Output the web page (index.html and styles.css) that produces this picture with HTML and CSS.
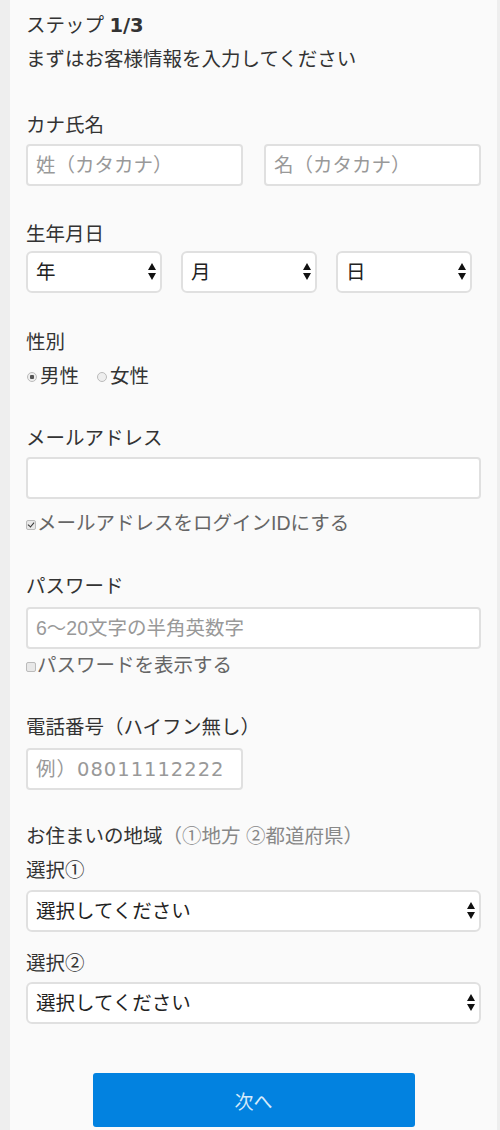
FILE: index.html
```html
<!DOCTYPE html>
<html lang="ja">
<head>
  <meta charset="UTF-8">
  <meta name="viewport" content="width=device-width, initial-scale=1.0">
  <title>お客様情報の入力</title>
  <link rel="stylesheet" href="styles.css">
</head>
<body>

  <div class="page">
    <h1 class="step">ステップ <b>1/3</b></h1>
    <p class="lead">まずはお客様情報を入力してください</p>

    <div class="field first">
      <label class="label">カナ氏名</label>
      <div class="row half">
        <input type="text" class="text" placeholder="姓（カタカナ）">
        <input type="text" class="text" placeholder="名（カタカナ）">
      </div>
    </div>

    <div class="field birth-field">
      <label class="label">生年月日</label>
      <div class="row birth">
        <div class="select-wrap">
          <select class="select"><option>年</option></select>
          <svg class="arrows" width="8" height="17" viewBox="0 0 8 17"><path d="M4 0 L8 7 L0 7 Z M0 10 L8 10 L4 17 Z" fill="#111"/></svg>
        </div>
        <div class="select-wrap">
          <select class="select"><option>月</option></select>
          <svg class="arrows" width="8" height="17" viewBox="0 0 8 17"><path d="M4 0 L8 7 L0 7 Z M0 10 L8 10 L4 17 Z" fill="#111"/></svg>
        </div>
        <div class="select-wrap">
          <select class="select"><option>日</option></select>
          <svg class="arrows" width="8" height="17" viewBox="0 0 8 17"><path d="M4 0 L8 7 L0 7 Z M0 10 L8 10 L4 17 Z" fill="#111"/></svg>
        </div>
      </div>
    </div>

    <div class="field">
      <label class="label">性別</label>
      <div class="radios">
        <label class="radio"><input type="radio" name="sex" checked>男性</label>
        <label class="radio"><input type="radio" name="sex">女性</label>
      </div>
    </div>

    <div class="field">
      <label class="label">メールアドレス</label>
      <input type="email" class="text wide">
      <label class="check mail-check"><input type="checkbox" checked>メールアドレスをログインIDにする</label>
    </div>

    <div class="field pass-field">
      <label class="label">パスワード</label>
      <input type="password" class="text wide" placeholder="6〜20文字の半角英数字">
      <label class="check pass-check"><input type="checkbox">パスワードを表示する</label>
    </div>

    <div class="field">
      <label class="label">電話番号（ハイフン無し）</label>
      <input type="tel" class="text tel" placeholder="例）08011112222">
    </div>

    <div class="field area">
      <label class="label">お住まいの地域<span class="note">（①地方 ②都道府県）</span></label>
      <label class="label sub">選択①</label>
      <div class="select-wrap">
        <select class="select"><option>選択してください</option></select>
        <svg class="arrows" width="8" height="17" viewBox="0 0 8 17"><path d="M4 0 L8 7 L0 7 Z M0 10 L8 10 L4 17 Z" fill="#111"/></svg>
      </div>
      <label class="label sub second">選択②</label>
      <div class="select-wrap last">
        <select class="select"><option>選択してください</option></select>
        <svg class="arrows" width="8" height="17" viewBox="0 0 8 17"><path d="M4 0 L8 7 L0 7 Z M0 10 L8 10 L4 17 Z" fill="#111"/></svg>
      </div>
    </div>

    <button class="next">次へ</button>
  </div>

</body>
</html>
```

FILE: styles.css
```css
body {
  margin: 0;
  background-color: #eeeeee;
  font-family: "Liberation Sans", "Noto Sans CJK JP", sans-serif;
  font-size: 19.5px;
  color: #333;
}
.page {
  margin: 0 3px 0 10px;
  min-height: 1130px;
  box-sizing: border-box;
  padding: 12px 16px 20px;
  background-color: #fafafa;
}
.step {
  margin: 0;
  font-size: 19.5px;
  font-weight: normal;
  line-height: 26px;
}
.step b {
  font-family: "DejaVu Sans", sans-serif;
}
.lead {
  margin: 7px 0 0;
  line-height: 26px;
}
.field {
  margin-top: 36px;
}
.field.first {
  margin-top: 40px;
}
.field.birth-field {
  margin-top: 35px;
}
.field.pass-field {
  margin-top: 37px;
}
.label {
  display: block;
  line-height: 26px;
}
.row {
  display: flex;
  margin-top: 6px;
}
.half {
  gap: 21px;
}
.half .text {
  width: 217px;
}
.birth {
  gap: 19px;
  margin-top: 4px;
}
.birth .select-wrap {
  width: 136px;
}
.text {
  display: block;
  box-sizing: border-box;
  height: 42px;
  padding: 0 8px;
  border: 2px solid #e0e0e0;
  border-radius: 4px;
  background-color: #fff;
  font-family: inherit;
  font-size: 19.5px;
  color: #333;
  outline: none;
}
.text::placeholder {
  color: #999;
}
.wide {
  width: 455px;
  margin-top: 6px;
}
.pass-field .wide {
  margin-top: 8px;
}
.tel {
  width: 217px;
  margin-top: 8px;
  font-family: "DejaVu Sans", "Noto Sans CJK JP", sans-serif;
  letter-spacing: 1px;
}
.select-wrap {
  position: relative;
  margin-top: 7px;
}
.select-wrap.last {
  margin-top: 6px;
}
.row .select-wrap {
  margin-top: 0;
}
.select {
  display: block;
  width: 100%;
  box-sizing: border-box;
  height: 42px;
  padding: 0 8px;
  border: 2px solid #e0e0e0;
  border-radius: 6px;
  background-color: #fff;
  font-family: inherit;
  font-size: 19.5px;
  color: #222;
  appearance: none;
  -webkit-appearance: none;
  outline: none;
}
.arrows {
  position: absolute;
  right: 6px;
  top: 12px;
}
.radios {
  display: flex;
  gap: 17px;
  margin-top: 8px;
  line-height: 26px;
}
.radio,
.check {
  display: flex;
  align-items: center;
  line-height: 26px;
}
.radio input {
  appearance: none;
  -webkit-appearance: none;
  width: 10px;
  height: 10px;
  margin: 2px 3px 0 1px;
  border: 1px solid #bbb;
  border-radius: 50%;
  background-color: #eee;
  box-sizing: border-box;
}
.radio input:checked {
  background: radial-gradient(circle, #555 0 2px, #eee 2.5px);
}
.check {
  color: #666;
}
.check input {
  appearance: none;
  -webkit-appearance: none;
  width: 10px;
  height: 10px;
  margin: 3px 1px 0 0;
  border: 1px solid #bbb;
  border-radius: 2px;
  background-color: #e8e8e8;
  box-sizing: border-box;
  position: relative;
}
.check input:checked::after {
  content: "";
  position: absolute;
  left: 2px;
  top: 0px;
  width: 3px;
  height: 5px;
  border: solid #333;
  border-width: 0 1.5px 1.5px 0;
  transform: rotate(40deg);
}
.mail-check {
  margin-top: 11px;
}
.pass-check {
  margin-top: 3px;
}
.area {
  margin-top: 33px;
}
.note {
  color: #888;
}
.sub {
  margin-top: 8px;
}
.sub.second {
  margin-top: 18px;
}
.next {
  display: block;
  width: 322px;
  height: 54px;
  margin: 49px auto 0;
  border: none;
  border-radius: 3px;
  background-color: #0282e0;
  color: #d6eafa;
  font-family: inherit;
  font-size: 19px;
  cursor: pointer;
}
```
